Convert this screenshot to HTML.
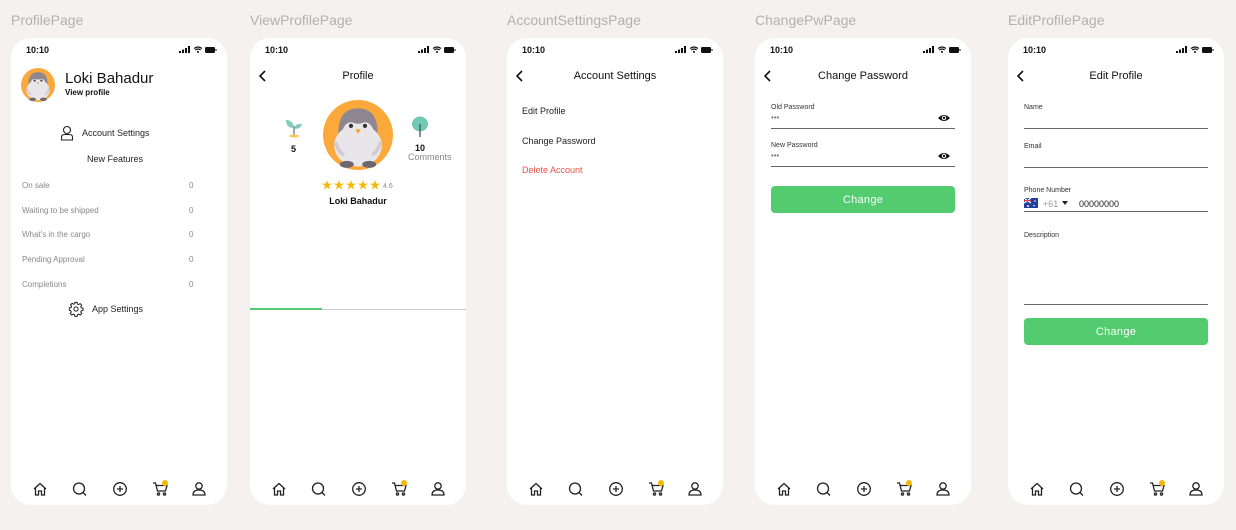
<!DOCTYPE html>
<html><head><meta charset="utf-8"><style>
*{margin:0;padding:0;box-sizing:border-box}
body{width:1236px;height:530px;background:#f6f1f1;font-family:"Liberation Sans",sans-serif;position:relative;overflow:hidden;color:#111}
.lbl{position:absolute;top:12px;font-size:14px;color:#b3b0b0}
.p{position:absolute;top:38px;width:216px;height:467px;background:#fff;border-radius:20px;overflow:hidden}
.a{position:absolute;white-space:nowrap}
.t{left:15px;top:7px;font-size:9px;font-weight:bold}
.st{right:10px;top:8px}
.ttl{left:0;width:216px;text-align:center;top:32px;font-size:11px}
.nav{left:0;top:440px}
.f{font-size:7px;color:#333}
.ln{position:absolute;left:16px;width:184px;height:1px;background:#666}
.btn{position:absolute;left:16px;width:184px;height:27px;background:#52cc6e;border-radius:4px;color:#fff;font-size:11px;text-align:center;line-height:29px;letter-spacing:.3px}
.li{font-size:8px;color:#888;left:11px}
.z{font-size:8px;color:#888;left:178px}
</style></head><body>
<svg width="0" height="0" style="position:absolute">
<defs>
<g id="status">
<rect x="0" y="5" width="2" height="2" fill="#111"/><rect x="3" y="3.5" width="2" height="3.5" fill="#111"/><rect x="6" y="2" width="2" height="5" fill="#111"/><rect x="9" y="0" width="2" height="7" fill="#111"/>
<path d="M15 2.5 Q19 -0.5 23 2.5 M16.3 4 Q19 2 21.7 4" stroke="#111" stroke-width="1.2" fill="none"/><circle cx="19" cy="6" r="1" fill="#111"/>
<rect x="26" y="1" width="10" height="6" rx="1.2" fill="#111"/><rect x="36.5" y="3" width="1" height="2" fill="#111"/>
</g>
<g id="nav" fill="none" stroke="#222" stroke-width="1.3">
<path d="M23 11 L29 5.5 L35 11 M24.5 10 V17 H27.5 V13 H30.5 V17 H33.5 V10"/>
<circle cx="68" cy="10.5" r="5.5"/><path d="M72 14.5 L75 17.5"/>
<circle cx="109" cy="11" r="6.3"/><path d="M109 8 V14 M106 11 H112"/>
<path d="M142 5 H144.5 L146.5 13 H154.5 L156 7.5 H145"/><circle cx="147.5" cy="16" r="1.1"/><circle cx="153.5" cy="16" r="1.1"/>
<circle cx="188" cy="8" r="3.2"/><path d="M182 17 Q182 12 188 12 Q194 12 194 17 Z"/>
</g>
<circle id="dot" cx="154" cy="5" r="3" fill="#f5b800"/>
<g id="penguin">
<circle cx="50" cy="50" r="50" fill="#fba93b"/>
<path d="M22 52 Q20 12 50 12 Q80 12 78 52 Z" fill="#8e8790"/>
<ellipse cx="50" cy="65" rx="34" ry="30" fill="#e9e6ea"/>
<path d="M26 50 Q30 30 42 32 Q50 36 58 32 Q70 30 74 50 Z" fill="#e9e6ea"/>
<circle cx="40" cy="37" r="3" fill="#333"/><circle cx="60" cy="37" r="3" fill="#333"/>
<path d="M46 42 H54 L50 48 Z" fill="#f6a11f"/>
<path d="M18 60 Q22 75 30 78" stroke="#cfcbd0" stroke-width="5" fill="none"/>
<path d="M82 60 Q78 75 70 78" stroke="#cfcbd0" stroke-width="5" fill="none"/>
<ellipse cx="34" cy="92" rx="10" ry="5" fill="#6d6870"/><ellipse cx="66" cy="92" rx="10" ry="5" fill="#6d6870"/>
</g>
<path id="star" d="M5 0 L6.2 3.6 H10 L6.9 5.8 L8.1 9.5 L5 7.2 L1.9 9.5 L3.1 5.8 L0 3.6 H3.8 Z" fill="#f5b800"/>
<path id="back" d="M6 1 L1 6 L6 11" stroke="#111" stroke-width="1.6" fill="none"/>
<g id="eye"><path d="M0 5 Q6 -1 12 5 Q6 11 0 5 Z" fill="#111"/><circle cx="6" cy="5" r="2.2" fill="#fff"/><circle cx="6" cy="5" r="1.2" fill="#111"/></g>
</defs></svg>

<div class="lbl" style="left:11px">ProfilePage</div>
<div class="lbl" style="left:250px">ViewProfilePage</div>
<div class="lbl" style="left:507px">AccountSettingsPage</div>
<div class="lbl" style="left:755px">ChangePwPage</div>
<div class="lbl" style="left:1008px">EditProfilePage</div>

<!-- Panel 1 -->
<div class="p" style="left:11px">
<div class="a t">10:10</div><svg class="a st" width="38" height="8"><use href="#status"/></svg>
<svg class="a" style="left:10px;top:30px" width="34" height="34" viewBox="0 0 100 100"><use href="#penguin"/></svg>
<div class="a" style="left:54px;top:32px;font-size:15px">Loki Bahadur</div>
<div class="a" style="left:54px;top:50px;font-size:8px;font-weight:bold">View profile</div>
<svg class="a" style="left:49px;top:87px" width="14" height="16" fill="none" stroke="#222" stroke-width="1.1"><circle cx="7" cy="5" r="3.5"/><path d="M1.5 15 V12 Q1.5 9.5 5 9.5 H9 Q12.5 9.5 12.5 12 V15 Z"/></svg>
<div class="a" style="left:71px;top:90px;font-size:9px;color:#222">Account Settings</div>
<div class="a" style="left:0;width:208px;text-align:center;top:116px;font-size:9px;color:#222">New Features</div>
<div class="a li" style="top:143px">On sale</div><div class="a z" style="top:143px">0</div>
<div class="a li" style="top:168px">Waiting to be shipped</div><div class="a z" style="top:168px">0</div>
<div class="a li" style="top:192px">What's in the cargo</div><div class="a z" style="top:192px">0</div>
<div class="a li" style="top:217px">Pending Approval</div><div class="a z" style="top:217px">0</div>
<div class="a li" style="top:242px">Completions</div><div class="a z" style="top:242px">0</div>
<svg class="a" style="left:57px;top:263px" width="16" height="16" viewBox="0 0 24 24" fill="none" stroke="#222" stroke-width="1.5"><circle cx="12" cy="12" r="3.2"/><path d="M10.3 2h3.4l.5 2.6 1.8.8 2.2-1.5 2.4 2.4-1.5 2.2.8 1.8 2.6.5v3.4l-2.6.5-.8 1.8 1.5 2.2-2.4 2.4-2.2-1.5-1.8.8-.5 2.6h-3.4l-.5-2.6-1.8-.8-2.2 1.5-2.4-2.4 1.5-2.2-.8-1.8L2 13.7v-3.4l2.6-.5.8-1.8-1.5-2.2 2.4-2.4 2.2 1.5 1.8-.8z"/></svg>
<div class="a" style="left:81px;top:266px;font-size:9px;color:#222">App Settings</div>
<svg class="a nav" width="216" height="22"><use href="#nav"/><use href="#dot"/></svg>
</div>

<!-- Panel 2 -->
<div class="p" style="left:250px">
<div class="a t">10:10</div><svg class="a st" width="38" height="8"><use href="#status"/></svg>
<svg class="a" style="left:9px;top:32px" width="8" height="12"><use href="#back"/></svg>
<div class="a ttl">Profile</div>
<svg class="a" style="left:34px;top:78px" width="20" height="22"><path d="M10 20 V10" stroke="#555" stroke-width="1"/><path d="M10 12 Q2 12 2 4 Q9 4 10 12 Z" fill="#7fcdbb"/><path d="M10 13 Q17 13 18 8 Q11 7 10 13 Z" fill="#7fcdbb"/><ellipse cx="10" cy="20" rx="5" ry="1.5" fill="#f7c65a"/></svg>
<div class="a" style="left:41px;top:106px;font-size:9px;font-weight:bold">5</div>
<svg class="a" style="left:73px;top:62px" width="70" height="70" viewBox="0 0 100 100"><use href="#penguin"/></svg>
<svg class="a" style="left:161px;top:78px" width="18" height="22"><ellipse cx="9" cy="8" rx="8" ry="7.5" fill="#6fcab5"/><path d="M9 8 V21" stroke="#455" stroke-width="1.3"/></svg>
<div class="a" style="left:165px;top:105px;font-size:9px;font-weight:bold">10</div>
<div class="a" style="left:158px;top:114px;font-size:9px;color:#888">Comments</div>
<svg class="a" style="left:72px;top:142px" width="80" height="11"><use href="#star"/><use href="#star" x="12"/><use href="#star" x="24"/><use href="#star" x="36"/><use href="#star" x="48"/><text x="61" y="8" font-size="7" fill="#888" font-family="Liberation Sans">4.6</text></svg>
<div class="a" style="left:0;width:216px;text-align:center;top:158px;font-size:9px;font-weight:bold">Loki Bahadur</div>
<div class="a" style="left:0;top:271px;width:216px;height:1px;background:#ccc"></div>
<div class="a" style="left:0;top:270px;width:72px;height:2px;background:#52cc6e"></div>
<svg class="a nav" width="216" height="22"><use href="#nav"/><use href="#dot"/></svg>
</div>

<!-- Panel 3 -->
<div class="p" style="left:507px">
<div class="a t">10:10</div><svg class="a st" width="38" height="8"><use href="#status"/></svg>
<svg class="a" style="left:9px;top:32px" width="8" height="12"><use href="#back"/></svg>
<div class="a ttl">Account Settings</div>
<div class="a" style="left:15px;top:68px;font-size:9px;color:#222">Edit Profile</div>
<div class="a" style="left:15px;top:98px;font-size:9px;color:#222">Change Password</div>
<div class="a" style="left:15px;top:127px;font-size:9px;color:#e8524a">Delete Account</div>
<svg class="a nav" width="216" height="22"><use href="#nav"/><use href="#dot"/></svg>
</div>

<!-- Panel 4 -->
<div class="p" style="left:755px">
<div class="a t">10:10</div><svg class="a st" width="38" height="8"><use href="#status"/></svg>
<svg class="a" style="left:9px;top:32px" width="8" height="12"><use href="#back"/></svg>
<div class="a ttl">Change Password</div>
<div class="a f" style="left:16px;top:66px">Old Password</div>
<div class="a f" style="left:16px;top:78px">***</div>
<svg class="a" style="left:183px;top:75px" width="12" height="10"><use href="#eye"/></svg>
<div class="ln" style="top:90px"></div>
<div class="a f" style="left:16px;top:104px">New Password</div>
<div class="a f" style="left:16px;top:116px">***</div>
<svg class="a" style="left:183px;top:113px" width="12" height="10"><use href="#eye"/></svg>
<div class="ln" style="top:128px"></div>
<div class="btn" style="top:148px">Change</div>
<svg class="a nav" width="216" height="22"><use href="#nav"/><use href="#dot"/></svg>
</div>

<!-- Panel 5 -->
<div class="p" style="left:1008px">
<div class="a t">10:10</div><svg class="a st" width="38" height="8"><use href="#status"/></svg>
<svg class="a" style="left:9px;top:32px" width="8" height="12"><use href="#back"/></svg>
<div class="a ttl">Edit Profile</div>
<div class="a f" style="left:16px;top:66px">Name</div>
<div class="ln" style="top:90px"></div>
<div class="a f" style="left:16px;top:105px">Email</div>
<div class="ln" style="top:129px"></div>
<div class="a f" style="left:16px;top:149px">Phone Number</div>
<svg class="a" style="left:16px;top:160px" width="14" height="10"><rect width="14" height="10" fill="#1f3f9a"/><path d="M0 0 L7 5 M7 0 L0 5" stroke="#fff" stroke-width="1.2"/><path d="M3.5 0 V5 M0 2.5 H7" stroke="#e33" stroke-width="1"/><circle cx="11" cy="3" r=".8" fill="#fff"/><circle cx="10" cy="7.5" r=".8" fill="#fff"/><circle cx="4" cy="8" r="1" fill="#fff"/></svg>
<div class="a" style="left:35px;top:161px;font-size:9px;color:#999">+61</div>
<svg class="a" style="left:54px;top:163px" width="6" height="4"><path d="M0 0 H6 L3 4 Z" fill="#222"/></svg>
<div class="a" style="left:71px;top:161px;font-size:9px;color:#222">00000000</div>
<div class="ln" style="top:173px"></div>
<div class="a f" style="left:16px;top:194px">Description</div>
<div class="ln" style="top:266px"></div>
<div class="btn" style="top:280px">Change</div>
<svg class="a nav" width="216" height="22"><use href="#nav"/><use href="#dot"/></svg>
</div>
</body></html>
